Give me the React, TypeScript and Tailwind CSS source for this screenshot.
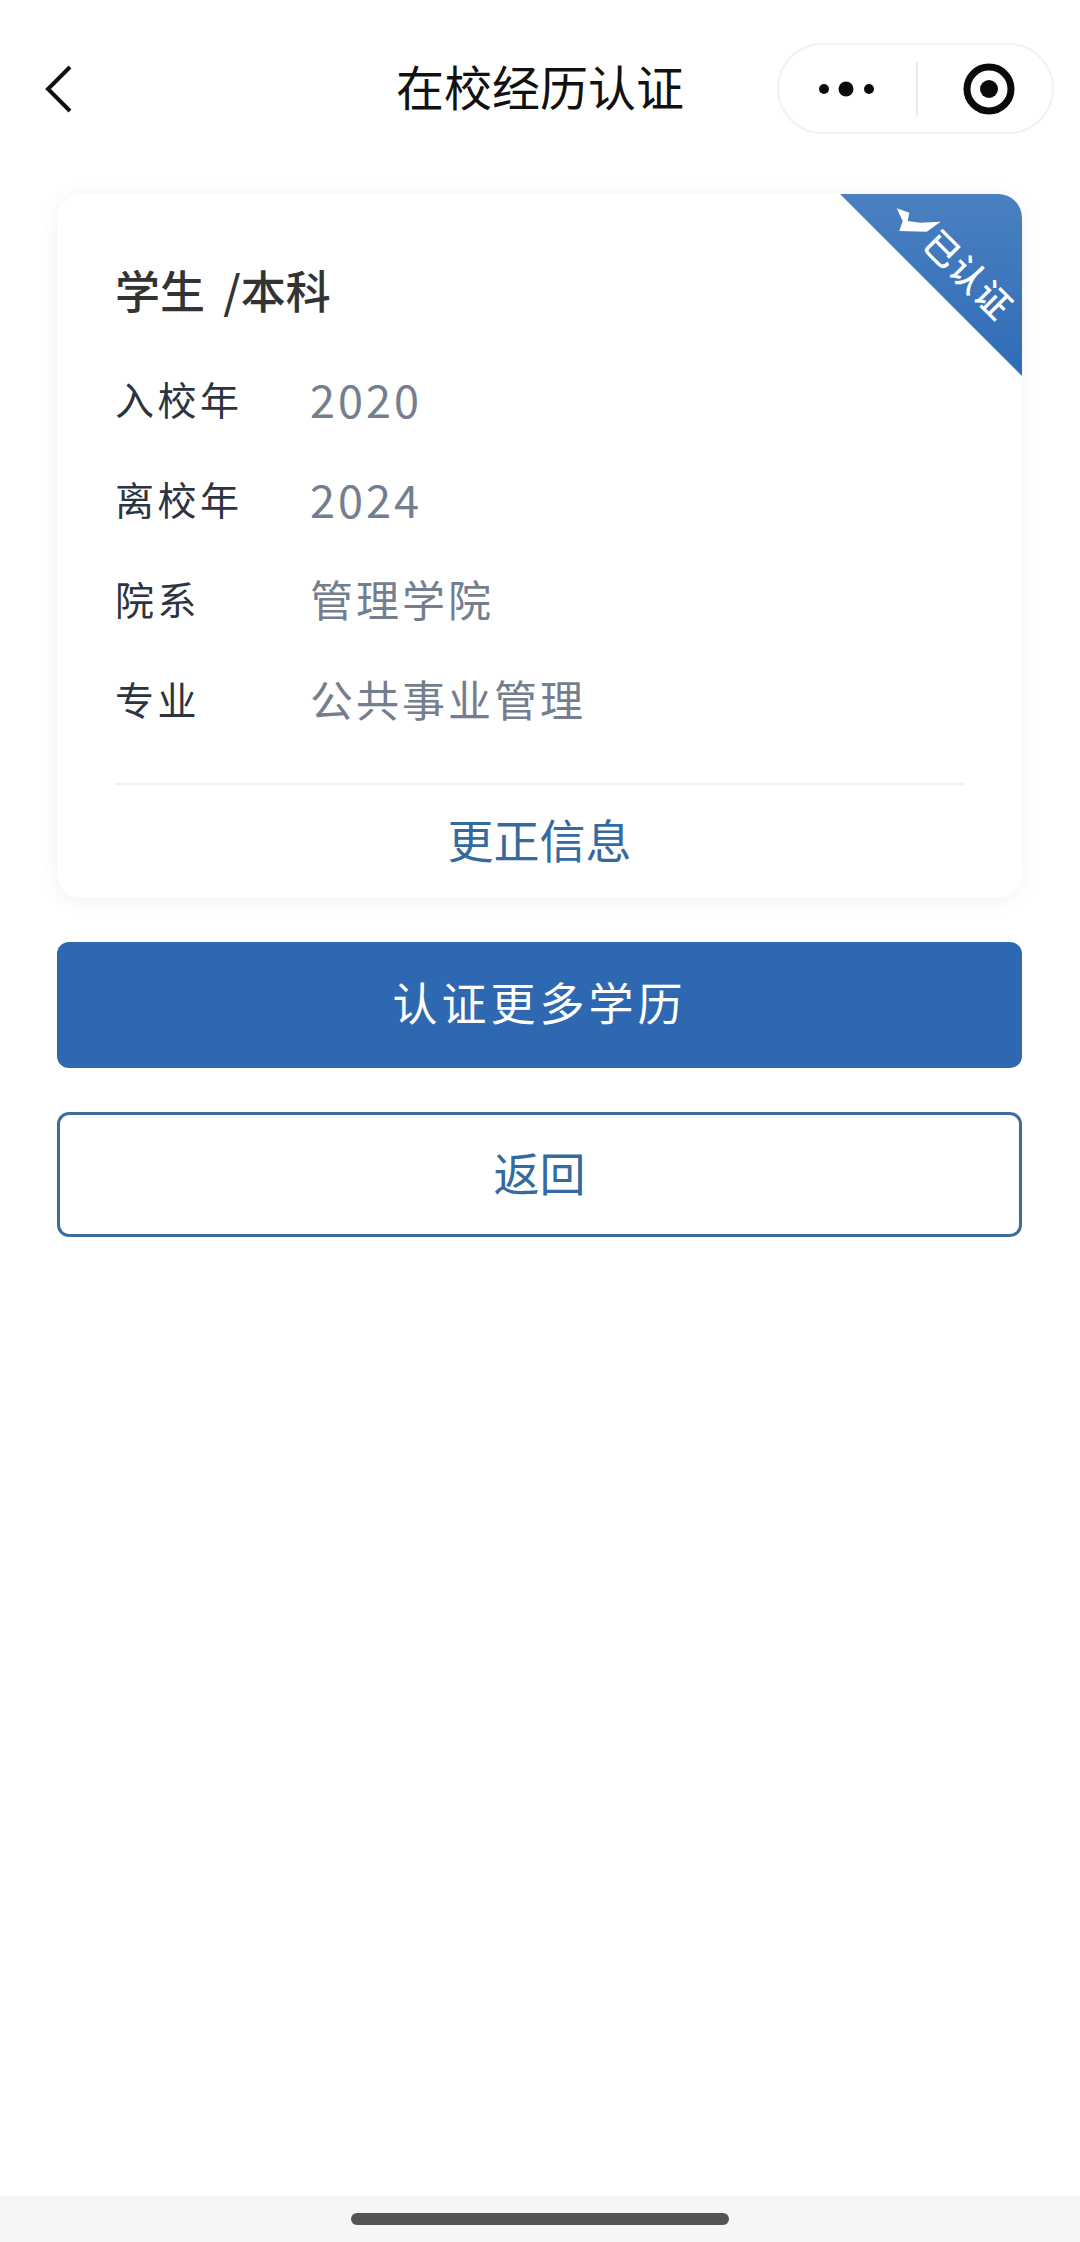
const rows = [
  { label: '入校年', value: '2020', numeric: true },
  { label: '离校年', value: '2024', numeric: true },
  { label: '院系', value: '管理学院', numeric: false },
  { label: '专业', value: '公共事业管理', numeric: false },
];

function Capsule() {
  return (
    <div className="flex h-[91px] w-[277px] items-center justify-self-end rounded-full border-2 border-[#f2f2f2] bg-white">
      <svg className="ml-[40px] h-[20px] w-[55px]" viewBox="0 0 55 20" fill="#0a0a0a">
        <circle cx="5" cy="10" r="5" />
        <circle cx="27" cy="10" r="7.5" />
        <circle cx="50" cy="10" r="5" />
      </svg>
      <div className="ml-[42px] h-[54px] w-[2px] bg-[#ececec]" />
      <svg className="ml-[45px] h-[52px] w-[52px]" viewBox="0 0 52 52">
        <circle cx="26" cy="26" r="22" fill="none" stroke="#0a0a0a" strokeWidth="7" />
        <circle cx="26" cy="26" r="9" fill="#0a0a0a" />
      </svg>
    </div>
  );
}

function Ribbon() {
  return (
    <div className="absolute right-0 top-0 h-[182px] w-[182px] rounded-tr-[24px] bg-gradient-to-b from-[#4a80c0] to-[#2f6cb6] [clip-path:polygon(0_0,100%_0,100%_100%)]">
      <svg className="absolute left-0 top-0 h-[182px] w-[182px]" viewBox="0 0 182 182" fill="#fff">
        <path d="M56.7 14.3 69.3 18.7 67.7 27 80 28.7 100.7 27.7 86.7 37.7 59.3 37 62.7 27Z" />
      </svg>
      <span className="absolute left-[130px] top-[79px] -translate-x-1/2 -translate-y-1/2 rotate-45 whitespace-nowrap text-[35px] font-medium leading-none tracking-[1px] text-white">
        已认证
      </span>
    </div>
  );
}

export default function App() {
  return (
    <div className="flex min-h-[2242px] flex-col bg-white font-['Noto_Sans_CJK_SC','Noto_Sans',sans-serif]">
      <header className="mt-[43px] grid grid-cols-[1fr_auto_1fr] items-center px-[26px]">
        <svg className="ml-[19px] h-[48px] w-[28px]" viewBox="0 0 28 48" fill="none" stroke="#111" strokeWidth="4">
          <path d="M25 2 3 24l22 22" />
        </svg>
        <h1 className="pb-[8px] text-[48px] font-normal leading-none text-[#111]">在校经历认证</h1>
        <Capsule />
      </header>

      <main className="ml-[57px] mr-[58px] mt-[60px] flex flex-col">
        <div className="relative rounded-[24px] bg-white px-[58px] pt-[70px] shadow-[0_2px_20px_rgba(0,0,0,0.06)]">
          <Ribbon />
          <h2 className="h-[60px] text-[45px] font-medium leading-[52px] text-[#333] [word-spacing:8px]">学生 /本科</h2>
          <div className="mt-[27px] flex flex-col">
            {rows.map((row) => (
              <div key={row.label} className="flex h-[100px] items-center pb-[5px]">
                <span className="w-[195px] text-[39px] tracking-[3.5px] text-[#2c3440]">{row.label}</span>
                <span className={row.numeric ? 'text-[45px] tracking-[3px] text-[#747e8e]' : 'text-[43px] tracking-[3px] text-[#747e8e]'}>
                  {row.value}
                </span>
              </div>
            ))}
          </div>
          <div className="mt-[32px] h-[2px] bg-[#f0f0f0]" />
          <div className="flex h-[113px] items-center justify-center pb-[6px] text-[46px] text-[#336a9f]">更正信息</div>
        </div>

        <button className="mt-[44px] h-[126px] rounded-[12px] bg-[#2d68b0] pb-[6px] text-[45px] tracking-[4px] text-white">
          认证更多学历
        </button>
        <button className="mt-[44px] h-[125px] rounded-[12px] border-[3px] border-[#3d6d9c] bg-white pb-[6px] text-[46px] text-[#336a9f]">
          返回
        </button>
      </main>

      <div className="flex-1" />
      <footer className="flex h-[46px] items-center justify-center bg-[#f6f6f6]">
        <div className="h-[12px] w-[378px] rounded-full bg-[#555]" />
      </footer>
    </div>
  );
}
